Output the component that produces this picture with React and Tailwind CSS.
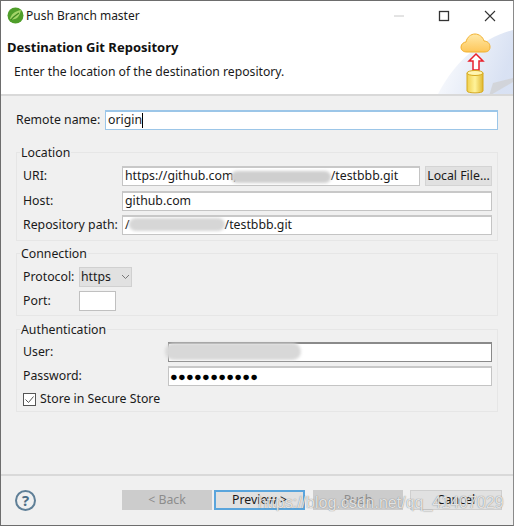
const Input = ({ className = "", children }) => (
  <div className={`h-[20px] bg-white border border-[#c4c4c4] border-t-2 border-t-[#c8c8c8] flex items-center pl-[2px] leading-none overflow-hidden whitespace-nowrap ${className}`}>
    {children}
  </div>
);

const Group = ({ title, className = "", children }) => (
  <div className={`relative mx-[15px] border border-[#e6e6e6] pl-[6px] pr-[4px] ${className}`}>
    <span className="absolute left-[3px] top-[-9px] bg-[#f0f0f0] px-[1px] leading-[17px]">{title}</span>
    {children}
  </div>
);

const Blur = ({ className = "" }) => (
  <span className={`absolute blur-[1.5px] rounded-full ${className}`} />
);

const Btn = ({ className = "", children }) => (
  <div className={`h-[20px] flex items-center justify-center ${className}`}>{children}</div>
);

const Row = ({ label, labelW = "w-[99px]", className = "", children }) => (
  <div className={`flex items-center ${className}`}>
    <span className={`shrink-0 whitespace-nowrap ${labelW}`}>{label}</span>
    {children}
  </div>
);

export default function App() {
  return (
    <div className="relative w-[514px] h-[526px] flex flex-col overflow-hidden bg-[#f0f0f0] border border-[#6d6d6d] border-r-[#8a8a8a] text-[12.3px] text-[#1a1a1a]" style={{ fontFamily: '"Noto Sans","Open Sans",sans-serif' }}>
      {/* title bar */}
      <div className="h-[29px] shrink-0 bg-white flex items-center pl-[6px]">
        <svg width="17" height="17" viewBox="0 0 17 17">
          <circle cx="8.5" cy="8.5" r="8" fill="#4f9e2a" />
          <path d="M3 12c1-5 5-8 11-9-1 5-3 8-6 9-2 .6-4 .5-5 0z" fill="#a3d468" />
          <path d="M4 13c2-3 5-5 8-7" stroke="#3f8a22" strokeWidth="1.2" fill="none" />
        </svg>
        <span className="ml-[2px] text-[12px]">Push Branch master</span>
        <div className="ml-auto flex items-center">
          <svg width="12" height="12" viewBox="0 0 12 12" className="mr-[33px]"><path d="M1 6h10" stroke="#c8c8c8" /></svg>
          <svg width="12" height="12" viewBox="0 0 12 12" className="mr-[34px]"><rect x="1.5" y="1.5" width="9" height="9" fill="none" stroke="#333" strokeWidth="1.3" /></svg>
          <svg width="12" height="12" viewBox="0 0 12 12" className="mr-[17px]"><path d="M1 1l10 10M11 1L1 11" stroke="#333" strokeWidth="1.1" /></svg>
        </div>
      </div>

      {/* banner */}
      <div className="relative h-[66px] shrink-0 bg-white border-b-2 border-[#d9d9d9] pl-[6px] overflow-hidden">
        <div className="font-bold text-[13px] leading-[18px] mt-[8px] text-[#111]">Destination Git Repository</div>
        <div className="ml-[7px] mt-[7px] leading-[18px] text-[12.2px]">Enter the location of the destination repository.</div>
        <svg width="80" height="66" viewBox="0 0 80 66" className="absolute right-0 top-0">
          <defs>
            <linearGradient id="bg" x1="0" y1="0" x2="1" y2="0.3"><stop offset="0" stopColor="#fff" /><stop offset="1" stopColor="#cfdaf0" /></linearGradient>
            <linearGradient id="cl" x1="0" y1="0" x2="0" y2="1"><stop offset="0" stopColor="#ffe9a8" /><stop offset="1" stopColor="#fdc659" /></linearGradient>
            <linearGradient id="cy" x1="0" y1="0" x2="1" y2="0"><stop offset="0" stopColor="#f0d050" /><stop offset="0.5" stopColor="#fff39a" /><stop offset="1" stopColor="#e0b830" /></linearGradient>
          </defs>
          <path d="M80 0C50 8 22 30 4 66h76z" fill="url(#bg)" opacity="0.8" />
          <path d="M60 53l20-5v4L56 66z" fill="#cfcfcf" opacity=".7" />
          <path d="M34 22c-4 0-6-2-6-5 0-3 3-5 5-5 1-5 5-8 9-8s8 3 9 7c3 0 6 2 6 6s-3 5-6 5z" fill="url(#cl)" stroke="#f2b12f" strokeWidth="1" />
          <path d="M43 24l7 7h-4v9h-6v-9h-4z" fill="#fff" stroke="#e8212c" strokeWidth="1.5" />
          <path d="M34 43v18c0 2.500 16 2.500 16 0V43z" fill="url(#cy)" stroke="#d6a91f" />
          <ellipse cx="42" cy="43" rx="8" ry="2.500" fill="#fff6b0" stroke="#d6a91f" />
        </svg>
      </div>

      {/* form */}
      <div className="flex-1 flex flex-col">
        <Row label="Remote name:" labelW="w-[89px]" className="pl-[15px] mt-[14px]">
          <Input className="w-[393px] !border-[#9cc6e8] !border-t-[#9cc6e8]">
            <span>origin</span><span className="inline-block w-px h-[15px] bg-black" />
          </Input>
        </Row>

        <Group title="Location" className="mt-[22px] h-[89px] pt-[13px]">
          <Row label="URI:">
            <Input className="w-[298px] relative">
              <span>https://github.com,</span>
              <Blur className="left-[108px] top-[3px] w-[100px] h-[12px] bg-[#cfcfcf]" />
              <span className="ml-[94px]">/testbbb.git</span>
            </Input>
            <div className="ml-[5px] w-[67px] h-[20px] bg-[#e1e1e1] border border-[#d4d4d4] flex items-center justify-center whitespace-nowrap">Local File...</div>
          </Row>
          <Row label="Host:" className="mt-[5px]"><Input className="w-[370px]">github.com</Input></Row>
          <Row label="Repository path:" className="mt-[4px]">
            <Input className="w-[370px] relative">
              <span>/</span>
              <Blur className="left-[6px] top-[1px] w-[96px] h-[13px] bg-[#d6d6d6]" />
              <span className="ml-[95px]">/testbbb.git</span>
            </Input>
          </Row>
        </Group>

        <Group title="Connection" className="mt-[12px] h-[63px] pt-[13px]">
          <Row label="Protocol:" labelW="w-[56px]">
            <div className="w-[53px] h-[20px] bg-[#e1e1e1] border border-[#d0d0d0] flex items-center pl-[1px]">
              <span>https</span>
              <svg width="9" height="6" viewBox="0 0 9 6" className="ml-[10px]"><path d="M1 1l3.500 3.500L8 1" fill="none" stroke="#777" /></svg>
            </div>
          </Row>
          <Row label="Port:" labelW="w-[56px]" className="mt-[4px]">
            <div className="w-[37px] h-[20px] bg-white border border-[#c0c0c0]" />
          </Row>
        </Group>

        <Group title="Authentication" className="mt-[13px] h-[83px] pt-[12px]">
          <Row label="User:" labelW="w-[145px]">
            <Input className="w-[324px] !border-[#8a8a8a] !border-t-[#8a8a8a] overflow-visible relative">
              <Blur className="left-[-4px] top-[-1px] w-[136px] h-[17px] bg-[#d8d8d8]" />
            </Input>
          </Row>
          <Row label="Password:" labelW="w-[145px]" className="mt-[4px]">
            <Input className="w-[324px] tracking-[0.3px] text-[12.8px] font-bold text-black !pl-[1px]">●●●●●●●●●●●</Input>
          </Row>
          <div className="flex items-center mt-[4px]">
            <svg width="13" height="13" viewBox="0 0 13 13"><rect x=".5" y=".5" width="12" height="12" fill="#fff" stroke="#555" /><path d="M2.500 6.500l3 3 5-6" fill="none" stroke="#555" /></svg>
            <span className="ml-[4px]">Store in Secure Store</span>
          </div>
        </Group>
      </div>

      {/* footer */}
      <div className="h-[51px] shrink-0 border-t-2 border-[#d9d9d9] flex items-start pt-[14px] pl-[14px] relative">
        <div className="w-[21px] h-[21px] rounded-full border-2 border-[#5f7f97] flex items-center justify-center font-bold text-[15px] text-[#4c6d86] leading-none">?</div>
        <Btn className="w-[90px] ml-[86px] bg-[#cccccc] text-[#8c8c8c]">&lt; Back</Btn>
        <Btn className="w-[91px] ml-[2px] bg-[#e1e1e1] border-2 border-[#5aa5dc]">Preview &gt;</Btn>
        <Btn className="w-[90px] ml-[8px] bg-[#cccccc] text-[#8c8c8c]">Push</Btn>
        <Btn className="w-[92px] ml-[7px] bg-[#e1e1e1] border border-[#cfcfcf]">Cancel</Btn>
        <span className="absolute left-[257px] top-[17px] text-[16px] leading-[20px] whitespace-nowrap text-white/80 [text-shadow:0_0_1px_rgba(80,80,80,0.9)]" style={{ fontFamily: '"Liberation Sans",sans-serif' }}>https://blog.csdn.net/qq_41407029</span>
      </div>
    </div>
  );
}
